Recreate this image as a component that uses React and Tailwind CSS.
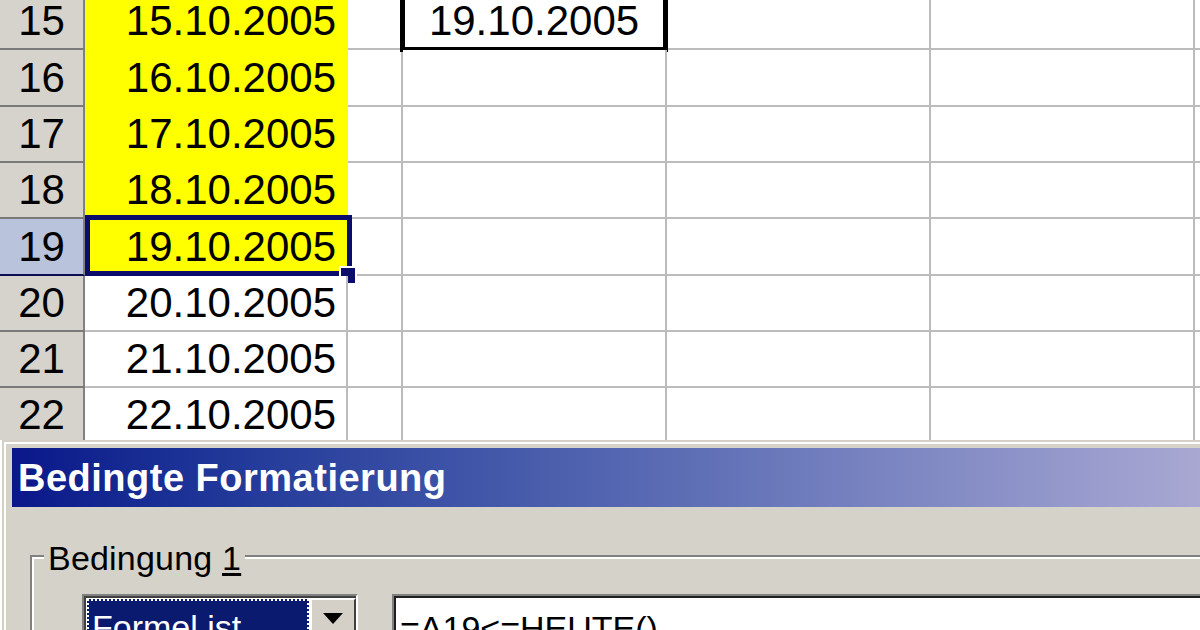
const rows = [
  { n: 15, h: 'h-[56px]' },
  { n: 16, h: 'h-[57px]' },
  { n: 17, h: 'h-[56px]' },
  { n: 18, h: 'h-[56px]' },
  { n: 19, h: 'h-[57px]' },
  { n: 20, h: 'h-[56px]' },
  { n: 21, h: 'h-[56px]' },
  { n: 22, h: 'h-[56px]' },
];

const font = { fontFamily: '"Liberation Sans", Arial, sans-serif' };

const Row = ({ n, h }) => {
  const yellow = n <= 19;
  const selected = n === 19;
  return (
    <div className={`flex ${h} text-[42px] leading-none text-black`}>
      <div
        className={`w-[85px] shrink-0 flex items-center justify-center border-r-2 border-r-[#808080] border-b-2 ${
          selected ? 'bg-[#b9c3db] border-b-[#0c0c50]' : 'bg-[#d6d3cc] border-b-[#7a7a7a]'
        }`}
      >
        {n}
      </div>
      <div
        className={`relative w-[263px] shrink-0 flex items-center justify-end pr-[10px] border-r-2 border-b-2 ${
          yellow ? 'bg-[#ffff00] border-[#ffff00]' : 'bg-white border-[#bcbcbc]'
        }`}
      >
        {n}.10.2005
        {selected && (
          <>
            <div className="absolute -top-[4px] left-0 w-[267px] h-[61px] border-[5px] border-[#0c0c6a]" />
            <div className="absolute top-[47px] left-[254px] w-[18px] h-[19px] bg-white p-[2px]">
              <div className="w-full h-full bg-[#0c0c6a]" />
            </div>
          </>
        )}
      </div>
      <div className="w-[55px] shrink-0 bg-white border-r-2 border-b-2 border-[#bcbcbc]" />
      <div className="relative w-[264px] shrink-0 bg-white border-r-2 border-b-2 border-[#bcbcbc]">
        {n === 15 && (
          <div className="absolute top-0 -left-[3px] w-[268px] h-[58px] bg-white border-[5px] border-black flex items-center justify-center pb-[5px]">
            19.10.2005
          </div>
        )}
      </div>
      <div className="w-[264px] shrink-0 bg-white border-r-2 border-b-2 border-[#bcbcbc]" />
      <div className="w-[264px] shrink-0 bg-white border-r-2 border-b-2 border-[#bcbcbc]" />
      <div className="flex-1 bg-white border-b-2 border-[#bcbcbc]" />
    </div>
  );
};

const Dialog = () => (
  <div className="h-[190px] ml-[2px] bg-[#d4d0c8] border-t-2 border-l-2 border-[#d4d0c8]">
    <div className="h-full border-t-2 border-l-2 border-white pt-[4px] pl-[6px] bg-[#d5d2c9]">
      <div className="h-[59px] w-[1200px] flex items-center pl-[6px] bg-gradient-to-r from-[#0b168a] to-[#aba9d3]">
        <span className="text-white font-bold text-[38px] leading-none tracking-[0.5px]">Bedingte Formatierung</span>
      </div>

      <div className="relative mt-[48px] ml-[18px] w-[1200px] h-[100px] border-t-2 border-l-2 border-[#808080]">
        <div className="h-full border-t-2 border-l-2 border-white pt-[35px] pl-[48px] flex">
          <div className="w-[276px] h-[60px] shrink-0 border-t-2 border-l-2 border-[#808080] border-r-2 border-r-white">
            <div className="h-full border-t-2 border-l-2 border-[#404040] bg-white flex">
              <div className="m-[1px] flex-1 bg-[#0a1a6e] border-2 border-dotted border-white pl-[3px] pt-[9px] text-white text-[34px] leading-none">
                Formel ist
              </div>
              <div className="w-[46px] shrink-0 bg-[#d4d0c8] border-t-2 border-l-2 border-white border-r-2 border-r-[#404040] flex justify-center pt-[13px]">
                <svg width="20" height="12" viewBox="0 0 20 12">
                  <polygon points="0,0 20,0 10,11" fill="#000" />
                </svg>
              </div>
            </div>
          </div>
          <div className="ml-[34px] flex-1 h-[60px] border-t-2 border-l-2 border-[#808080]">
            <div className="h-full border-t-2 border-l-2 border-[#202020] bg-white pl-[4px] pt-[13px] text-[34px] leading-none text-black">
              =A19&lt;=HEUTE()
            </div>
          </div>
        </div>
        <div className="absolute -top-[16px] left-[12px] px-[4px] bg-[#d5d2c9] text-[34px] leading-none text-black tracking-[0.2px]">
          Bedingung <span className="underline underline-offset-[3px]">1</span>
        </div>
      </div>
    </div>
  </div>
);

export default function App() {
  return (
    <div className="w-[1200px] h-[630px] overflow-hidden bg-white" style={font}>
      <div className="h-[440px] overflow-hidden">
        <div className="-mt-[6px]">
          {rows.map((r) => (
            <Row key={r.n} {...r} />
          ))}
        </div>
      </div>
      <Dialog />
    </div>
  );
}
